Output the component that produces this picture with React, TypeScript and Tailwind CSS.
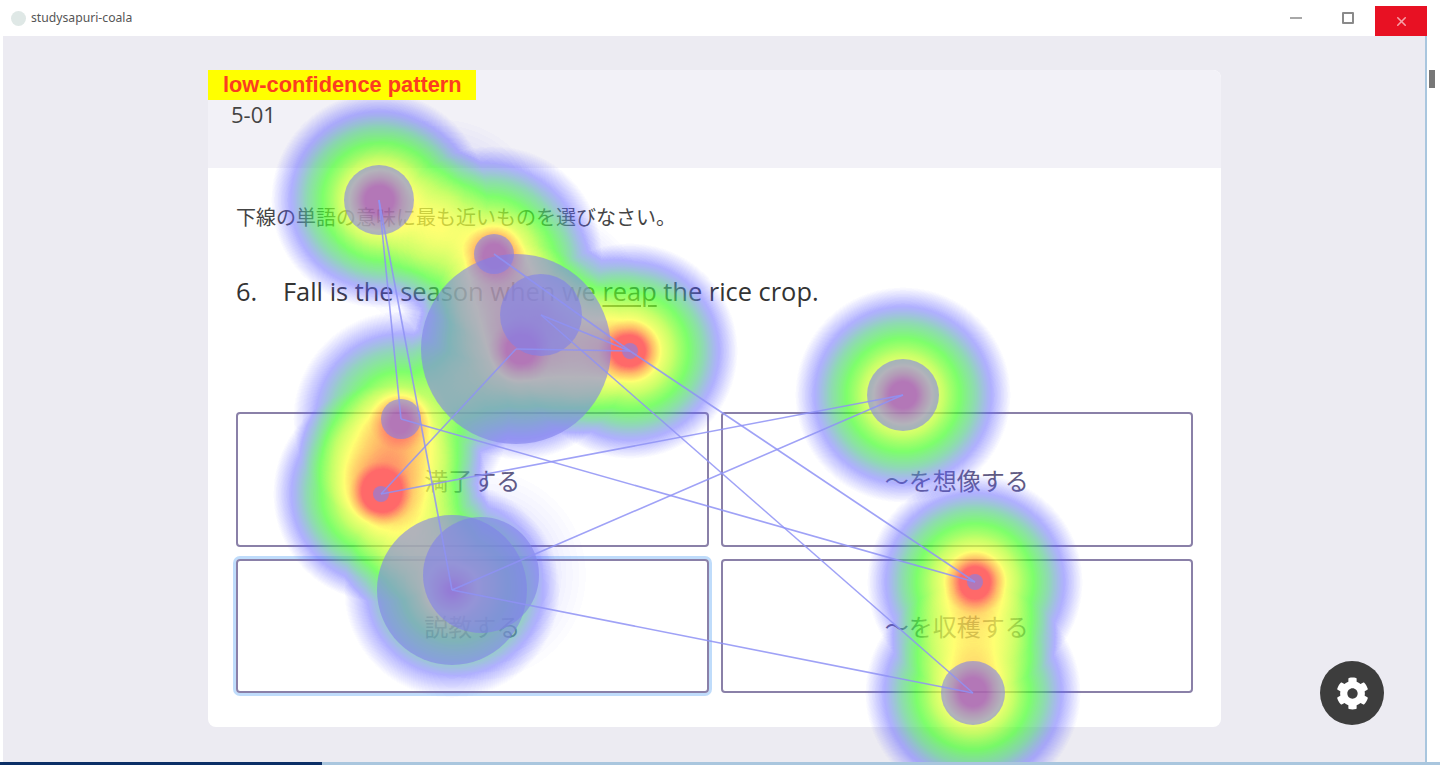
import React from 'react';
import { X } from 'lucide-react';
import { FaCog } from 'react-icons/fa';

const HEAT = [
  [379, 200, 0.85],
  [440, 225, 0.12],
  [494, 254, 0.78],
  [520, 352, 0.8],
  [541, 315, 0.2],
  [630, 351, 0.88],
  [401, 419, 0.72],
  [381, 494, 0.9],
  [452, 590, 0.72],
  [481, 575, 0.1],
  [903, 395, 0.85],
  [975, 582, 0.88],
  [973, 693, 0.85],
];

const FIXATIONS = [
  [379, 200, 35],
  [494, 254, 20],
  [516, 349, 95],
  [541, 315, 41],
  [630, 351, 8],
  [401, 419, 20],
  [381, 494, 8],
  [452, 590, 75],
  [481, 575, 58],
  [903, 395, 36],
  [975, 582, 8],
  [973, 693, 32],
];

const PATH = [
  [379, 200, 401, 419],
  [379, 200, 452, 590],
  [401, 419, 975, 582],
  [381, 494, 903, 395],
  [381, 494, 516, 349],
  [452, 590, 903, 395],
  [452, 590, 973, 693],
  [494, 254, 630, 351],
  [541, 315, 630, 351],
  [516, 349, 630, 351],
  [630, 351, 975, 582],
  [541, 315, 973, 693],
];

const Heatmap: React.FC = () => (
  <svg className="absolute left-0 top-0" width={1440} height={762} viewBox="0 0 1440 762">
    <defs>
      <radialGradient id="blob">
        <stop offset="0" stopColor="#000" stopOpacity="1" />
        <stop offset="0.15" stopColor="#000" stopOpacity="0.78" />
        <stop offset="0.3" stopColor="#000" stopOpacity="0.54" />
        <stop offset="0.45" stopColor="#000" stopOpacity="0.41" />
        <stop offset="0.65" stopColor="#000" stopOpacity="0.26" />
        <stop offset="0.8" stopColor="#000" stopOpacity="0.13" />
        <stop offset="1" stopColor="#000" stopOpacity="0" />
      </radialGradient>
      <filter id="palette" filterUnits="userSpaceOnUse" x="0" y="0" width="1440" height="762" colorInterpolationFilters="sRGB">
        <feColorMatrix type="matrix" values="0 0 0 1 0  0 0 0 1 0  0 0 0 1 0  0 0 0 1 0" />
        <feComponentTransfer>
          <feFuncR type="table" tableValues="0.38 0.38 0.3 0.27 0.7 1 1 1 1 1 1" />
          <feFuncG type="table" tableValues="0.38 0.38 0.75 1 1 1 0.65 0.2 0.2 0.2 0.2" />
          <feFuncB type="table" tableValues="1 1 0.55 0.17 0.2 0.25 0.2 0.2 0.2 0.2 0.2" />
          <feFuncA type="table" tableValues="0 0.5 0.62 0.7 0.74 0.74 0.74 0.74 0.74 0.74 0.74" />
        </feComponentTransfer>
      </filter>
    </defs>
    <g filter="url(#palette)">
      {HEAT.map(([x, y, peak]) => (
        <circle key={`${x}-${y}`} cx={x} cy={y} r={108} fill="url(#blob)" opacity={peak} />
      ))}
    </g>
    {FIXATIONS.map(([x, y, r]) => (
      <circle key={`${x}-${y}`} cx={x} cy={y} r={r} fill="#8080eb" opacity={0.6} />
    ))}
    {PATH.map(([x1, y1, x2, y2]) => (
      <line key={`${x1}-${y1}-${x2}-${y2}`} x1={x1} y1={y1} x2={x2} y2={y2} stroke="#8f92f5" strokeWidth={1.6} opacity={0.85} />
    ))}
  </svg>
);

const Option: React.FC<{ label: string; focused?: boolean }> = ({ label, focused }) => (
  <div
    className={`h-[134.5px] pt-[3px] flex items-center justify-center rounded-[4px] border-2 border-[#8a80a8] text-[24px] text-[#5f5a82] ${
      focused ? 'shadow-[0_0_0_3px_#bfdcfb]' : ''
    }`}
  >
    {label}
  </div>
);

export default function App() {
  return (
    <div
      className="relative w-[1440px] h-[775px] overflow-hidden bg-white flex flex-col blur-[0.7px]"
      style={{ fontFamily: '"Open Sans", "Noto Sans CJK JP", sans-serif' }}
    >
      {/* title bar */}
      <div className="h-[36px] shrink-0 flex items-center pr-[13px] bg-white">
        <div className="ml-[11px] w-[15px] h-[15px] rounded-full bg-[#dfe8e6]" />
        <span className="ml-[5px] text-[12.2px] text-[#555]" style={{ fontFamily: '"Noto Sans", sans-serif' }}>
          studysapuri-coala
        </span>
        <div className="ml-auto flex items-center h-full">
          <div className="w-[12px] h-[2px] bg-[#a8a8a8]" />
          <div className="ml-[40px] w-[12px] h-[12px] border-2 border-[#8a8a8a] rounded-[1px]" />
          <div className="ml-[21px] mt-[6px] w-[52px] h-[30px] bg-[#e81123] flex items-center justify-center">
            <X className="w-[15px] h-[15px] text-[#f6a0a8]" strokeWidth={2.5} />
          </div>
        </div>
      </div>

      {/* app window */}
      <div className="flex h-[726px] shrink-0">
        <div className="ml-[3px] w-[1424px] bg-[#ecebf2] border-r-2 border-[#a9c6de] pt-[34px] pl-[205px]">
          <div className="w-[1013px] h-[657px] bg-white rounded-[8px] flex flex-col">
            <div className="h-[98px] shrink-0 bg-[#f2f1f7] rounded-t-[8px]">
              <div className="relative z-10 w-[268px] h-[30px] bg-[#ffff00] pl-[15px] flex items-center">
                <span className="text-[21.8px] font-bold leading-none text-[#fb3d20]" style={{ fontFamily: '"Liberation Sans", sans-serif' }}>
                  low-confidence pattern
                </span>
              </div>
              <div className="pl-[23px] text-[22px] leading-[28px] text-[#444]">5-01</div>
            </div>
            <div className="flex-1 px-[28px] pt-[36px]">
              <p className="text-[20px] leading-[28px] text-[#444]">下線の単語の意味に最も近いものを選びなさい。</p>
              <p className="mt-[41px] flex text-[25.4px] leading-[36px] text-[#333]">
                <span className="w-[47px]">6.</span>
                <span>
                  Fall is the season when we <span className="underline underline-offset-4">reap</span> the rice crop.
                </span>
              </p>
              <div className="mt-[103px] grid grid-cols-2 gap-x-[12px] gap-y-[12px]">
                <Option label="満了する" />
                <Option label="〜を想像する" />
                <Option label="説教する" focused />
                <Option label="〜を収穫する" />
              </div>
            </div>
          </div>
        </div>
        {/* sliver of the window behind */}
        <div className="flex-1 bg-white pt-[34px] pl-[2px]">
          <div className="w-[6px] h-[18px] bg-[#777]" />
        </div>
      </div>

      {/* progress */}
      <div className="h-[3px] shrink-0 bg-[#a9c6de]">
        <div className="h-full w-[322px] bg-[#0b2f66]" />
      </div>

      <Heatmap />

      <button className="absolute left-[1320px] top-[661px] w-[64px] h-[64px] rounded-full bg-[#3d3d3d] flex items-center justify-center">
        <FaCog className="w-[33px] h-[33px] text-white" />
      </button>
    </div>
  );
}
